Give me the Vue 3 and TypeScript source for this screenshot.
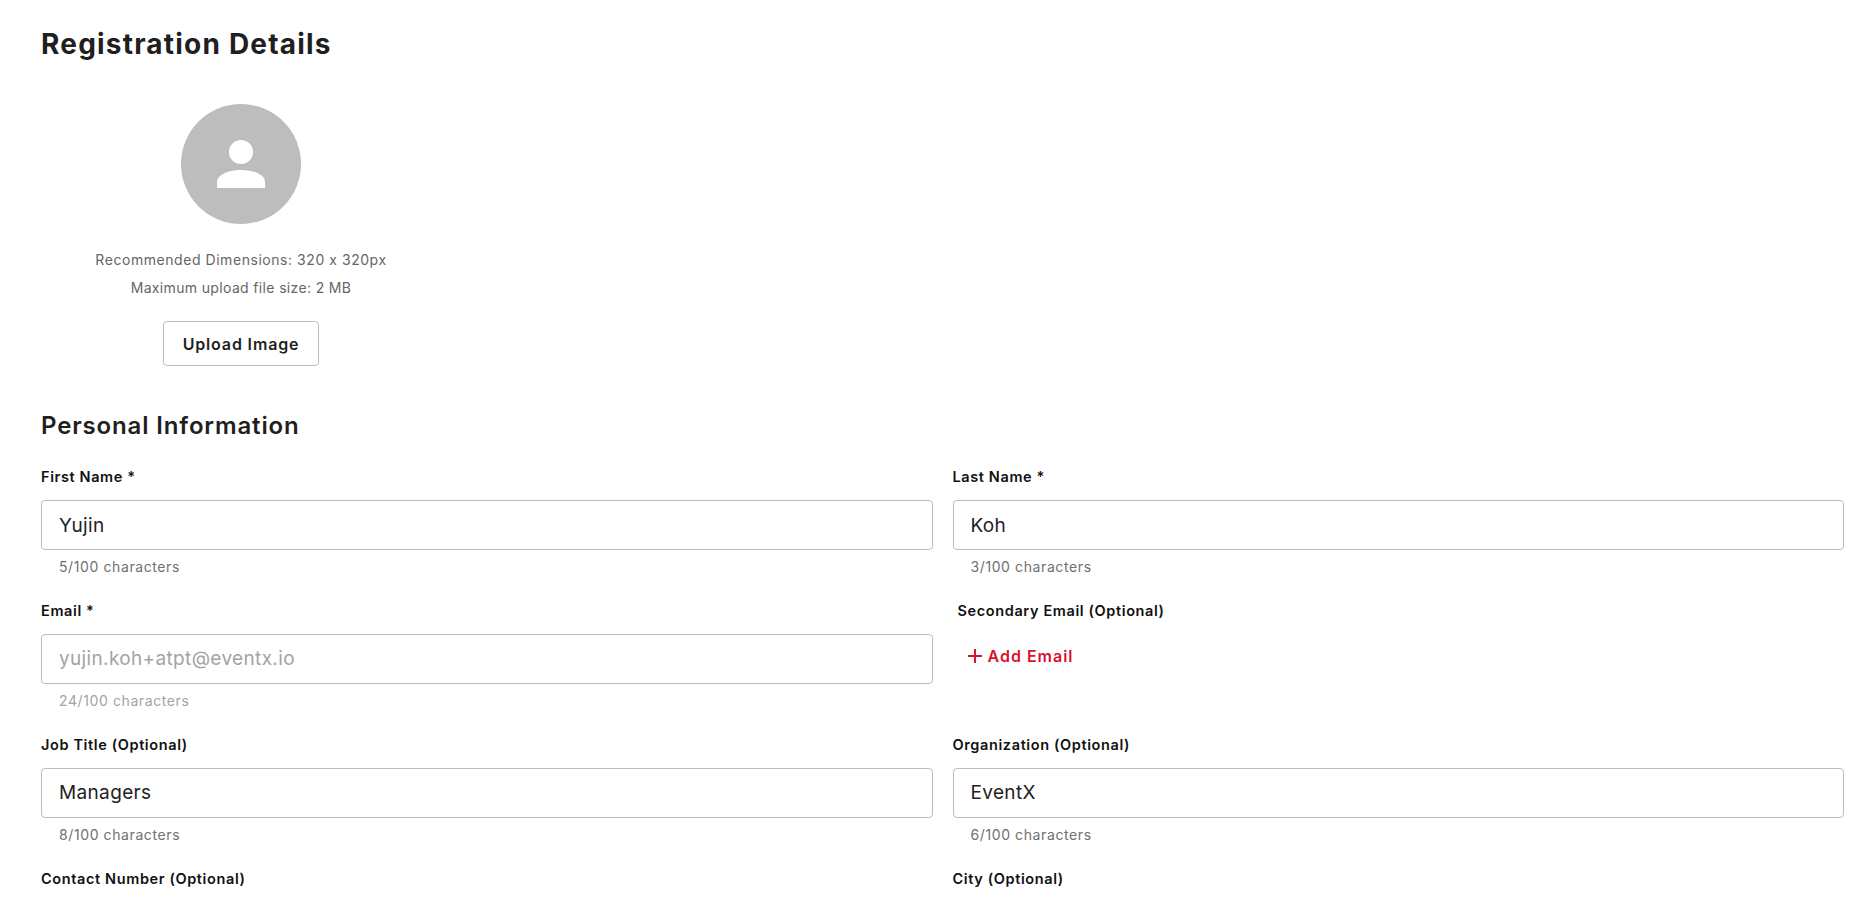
<script setup lang="ts">
interface Field { label: string; value: string; count: string; muted?: boolean }
const top: Field[] = [
  { label: 'First Name *', value: 'Yujin', count: '5/100 characters' },
  { label: 'Last Name *', value: 'Koh', count: '3/100 characters' },
  { label: 'Email *', value: 'yujin.koh+atpt@eventx.io', count: '24/100 characters', muted: true },
]
const bottom: Field[] = [
  { label: 'Job Title (Optional)', value: 'Managers', count: '8/100 characters' },
  { label: 'Organization (Optional)', value: 'EventX', count: '6/100 characters' },
]
</script>

<template>
  <main class="page">
    <h1 class="title">Registration Details</h1>
    <section class="avatar-block">
      <div class="avatar">
        <svg width="50" height="50" viewBox="0 0 50 50" aria-hidden="true">
          <circle cx="25" cy="13" r="12" fill="#fff" />
          <path d="M1 49V43C1 36 12 31 25 31S49 36 49 43V49Z" fill="#fff" />
        </svg>
      </div>
      <p class="hint first">Recommended Dimensions: 320 x 320px</p>
      <p class="hint">Maximum upload file size: 2 MB</p>
      <button class="upload" type="button">Upload Image</button>
    </section>

    <h2 class="subtitle">Personal Information</h2>
    <div class="grid">
      <div v-for="f in top" :key="f.label" class="field">
        <label class="label">{{ f.label }}</label>
        <input class="input" :class="{ muted: f.muted }" :value="f.value" readonly />
        <div class="count" :class="{ 'count-muted': f.muted }">{{ f.count }}</div>
      </div>
      <div class="field secondary">
        <label class="label">Secondary Email (Optional)</label>
        <button class="add" type="button">
          <svg width="16" height="16" viewBox="0 0 16 16" aria-hidden="true">
            <path d="M8 1V15M1 8H15" stroke="#d9122f" stroke-width="2" fill="none" />
          </svg>
          <span>Add Email</span>
        </button>
      </div>
      <div v-for="f in bottom" :key="f.label" class="field">
        <label class="label">{{ f.label }}</label>
        <input class="input" :value="f.value" readonly />
        <div class="count">{{ f.count }}</div>
      </div>
      <div class="field"><label class="label">Contact Number (Optional)</label></div>
      <div class="field"><label class="label">City (Optional)</label></div>
    </div>
  </main>
</template>

<style>
html, body { margin: 0; background: #fff; overflow: hidden; }
</style>

<style scoped>
.page {
  box-sizing: border-box;
  height: 899px;
  overflow: hidden;
  padding: 24px 23px 0 41px;
  font-family: Inter, "Liberation Sans", sans-serif;
  font-feature-settings: "calt" 0;
  color: #1f1f1f;
}
.title { margin: 0; font-size: 28px; line-height: 40px; font-weight: 700; letter-spacing: 1.2px; }
.avatar-block { width: 400px; display: flex; flex-direction: column; align-items: center; margin-top: 40px; }
.avatar { width: 120px; height: 120px; border-radius: 50%; background: #bdbdbd; display: flex; align-items: center; justify-content: center; }
.hint { margin: 0; font-size: 14px; line-height: 28px; color: #666; letter-spacing: 0.35px; }
.hint.first { margin-top: 22px; letter-spacing: 0.55px; }
.upload { margin-top: 19px; width: 156px; height: 45px; background: #fff; border: 1px solid #bdbdbd; border-radius: 4px; font: 600 16px Inter, sans-serif; letter-spacing: 0.85px; color: #1f1f1f; padding: 0; }
.subtitle { margin: 44px 0 0; font-size: 24px; line-height: 32px; font-weight: 600; letter-spacing: 0.85px; }
.grid { display: grid; grid-template-columns: 1fr 1fr; column-gap: 20px; margin-top: 25.2px; }
.field { height: 133.8px; display: flex; flex-direction: column; }
.label { font-size: 14.5px; line-height: 20px; font-weight: 600; color: #111; letter-spacing: 0.62px; }
.input { box-sizing: border-box; margin-top: 13px; height: 49.8px; width: 100%; padding: 0 17px 0 17px; border: 1px solid #bdbdbd; border-radius: 4px; font: 400 19px Inter, sans-serif; letter-spacing: 0.35px; font-feature-settings: "calt" 0; color: #222; outline: none; }
.input.muted { color: #a3a3a3; }
.count { margin: 7px 0 0 18px; font-size: 14px; line-height: 20px; color: #707070; letter-spacing: 0.6px; }
.count-muted { color: #a3a3a3; }
.secondary { padding-left: 5px; }
.add { margin: 15px 0 0 9px; padding: 0; display: flex; align-items: center; gap: 5px; height: 40px; border: 0; background: none; color: #d9122f; font: 600 16px Inter, sans-serif; letter-spacing: 1px; }
</style>
